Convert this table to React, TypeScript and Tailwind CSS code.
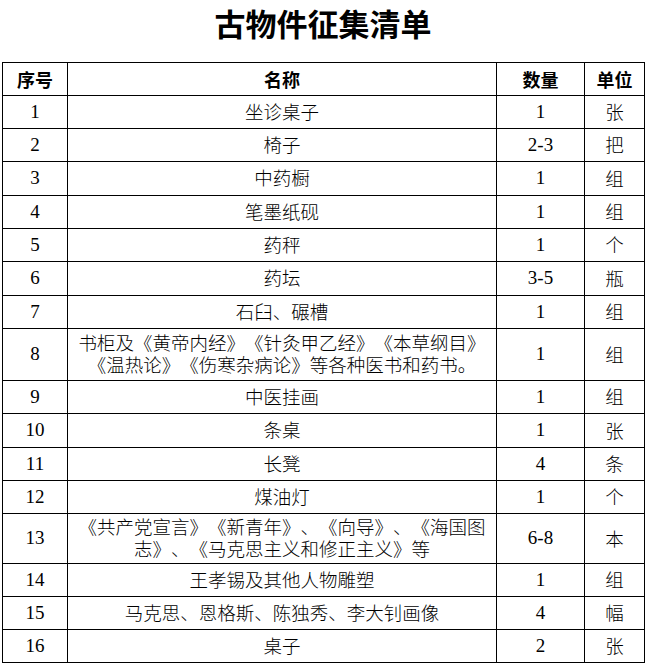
import React from 'react'

type Row = {
  no: string
  name: React.ReactNode
  qty: string
  unit: string
  h: string
}

const rows: Row[] = [
  { no: '1', name: '坐诊桌子', qty: '1', unit: '张', h: 'h-[33px]' },
  { no: '2', name: '椅子', qty: '2-3', unit: '把', h: 'h-[33px]' },
  { no: '3', name: '中药橱', qty: '1', unit: '组', h: 'h-[34px]' },
  { no: '4', name: '笔墨纸砚', qty: '1', unit: '组', h: 'h-[33px]' },
  { no: '5', name: '药秤', qty: '1', unit: '个', h: 'h-[33px]' },
  { no: '6', name: '药坛', qty: '3-5', unit: '瓶', h: 'h-[34px]' },
  { no: '7', name: '石臼、碾槽', qty: '1', unit: '组', h: 'h-[33px]' },
  {
    no: '8',
    name: (
      <>
        书柜及《黄帝内经》《针灸甲乙经》《本草纲目》
        <br />
        《温热论》《伤寒杂病论》等各种医书和药书。
      </>
    ),
    qty: '1',
    unit: '组',
    h: 'h-[52px]',
  },
  { no: '9', name: '中医挂画', qty: '1', unit: '组', h: 'h-[33px]' },
  { no: '10', name: '条桌', qty: '1', unit: '张', h: 'h-[34px]' },
  { no: '11', name: '长凳', qty: '4', unit: '条', h: 'h-[33px]' },
  { no: '12', name: '煤油灯', qty: '1', unit: '个', h: 'h-[33px]' },
  {
    no: '13',
    name: (
      <>
        《共产党宣言》《新青年》、《向导》、《海国图
        <br />
        志》、《马克思主义和修正主义》等
      </>
    ),
    qty: '6-8',
    unit: '本',
    h: 'h-[50px]',
  },
  { no: '14', name: '王孝锡及其他人物雕塑', qty: '1', unit: '组', h: 'h-[33px]' },
  { no: '15', name: '马克思、恩格斯、陈独秀、李大钊画像', qty: '4', unit: '幅', h: 'h-[33px]' },
  { no: '16', name: '桌子', qty: '2', unit: '张', h: 'h-[33px]' },
]

const font = "font-['Liberation_Serif','Noto_Sans_CJK_SC',serif]"
const cell = 'flex items-center justify-center border-r border-b border-black text-center'

export default function App() {
  return (
    <div className={`w-[646px] h-[664px] bg-white text-black ${font} [text-spacing-trim:space-all]`}>
      <div className="flex h-[62px] justify-center pt-[3px]">
        <h1 className="font-['Noto_Sans_CJK_SC',sans-serif] text-[31px] font-bold leading-[40px]">
          古物件征集清单
        </h1>
      </div>

      <div className="ml-[2px] grid w-[643px] grid-cols-[65px_429px_88px_60px] border-l border-t border-black">
        {['序号', '名称', '数量', '单位'].map((t) => (
          <div
            key={t}
            className={`${cell} h-[33px] font-['Noto_Sans_CJK_SC',sans-serif] text-[18px] font-bold`}
          >
            {t}
          </div>
        ))}

        {rows.map((r) => (
          <React.Fragment key={r.no}>
            <div className={`${cell} ${r.h} text-[19px]`}>{r.no}</div>
            <div className={`${cell} ${r.h} text-[18.5px] leading-[22px]`}>
              <span className="-mt-[3px] whitespace-nowrap font-['Noto_Sans_CJK_SC',sans-serif] font-light">
                {r.name}
              </span>
            </div>
            <div className={`${cell} ${r.h} text-[19px]`}>{r.qty}</div>
            <div className={`${cell} ${r.h} font-['Noto_Sans_CJK_SC',sans-serif] text-[18.5px] font-light`}>
              {r.unit}
            </div>
          </React.Fragment>
        ))}
      </div>
    </div>
  )
}
